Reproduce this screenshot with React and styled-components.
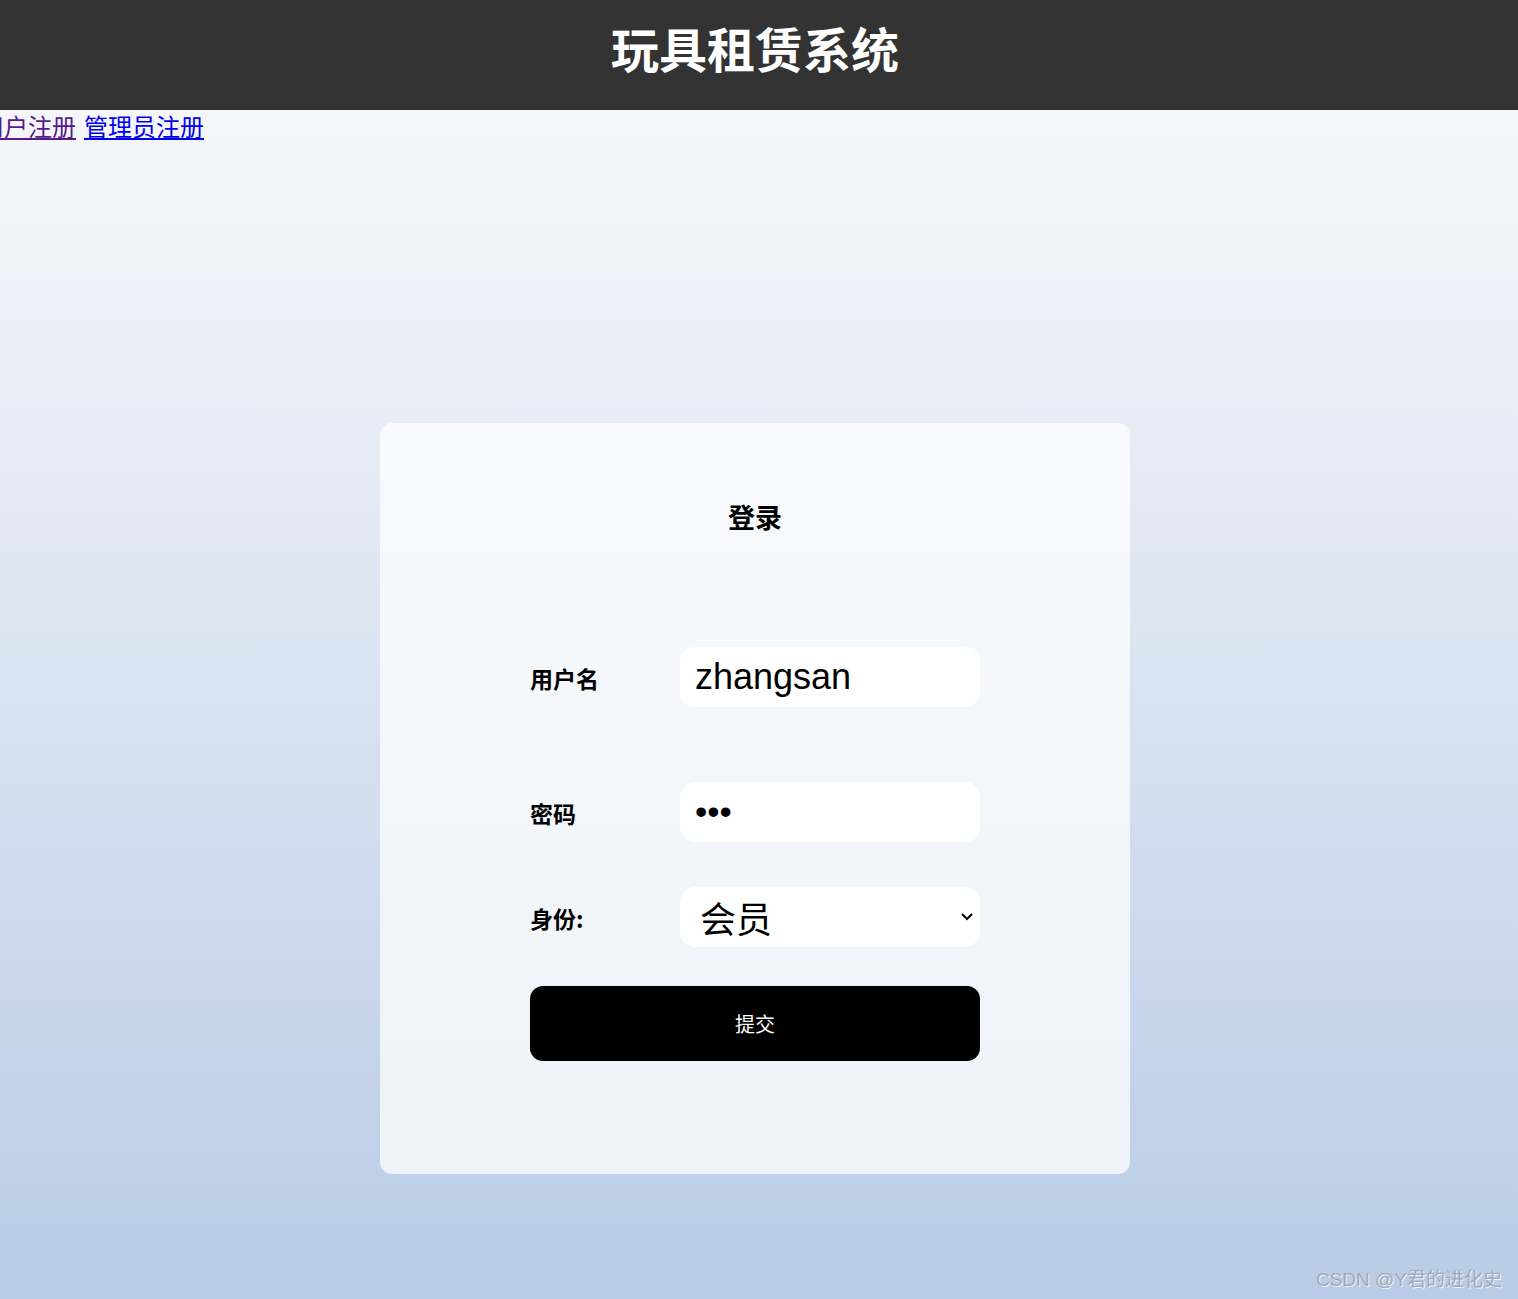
import React from 'react'
import styled, { createGlobalStyle } from 'styled-components'

const GlobalStyle = createGlobalStyle`
  html, body {
    margin: 0;
    padding: 0;
  }
  body {
    font-family: "Liberation Sans", "Noto Sans CJK SC", sans-serif;
    background: linear-gradient(to bottom, #f9fafd 0%, #e9eef7 30%, #b9cbe6 100%);
    min-height: 100vh;
  }
`

const Page = styled.div`
  min-height: 1299px;
  position: relative;
`

const Header = styled.header`
  height: 110px;
  padding-right: 8px;
  background-color: #333333;
  display: flex;
  align-items: center;
  justify-content: center;
`

const Title = styled.h1`
  margin: 0 0 16px;
  color: #ffffff;
  font-size: 48px;
  font-weight: 700;
  font-family: "Noto Sans CJK SC", sans-serif;
`

const Nav = styled.nav`
  margin-left: -20px;
  font-size: 24px;
  line-height: 32px;
  font-family: "Noto Sans CJK SC", sans-serif;
  display: flex;
  gap: 8px;
`

const NavLink = styled.a`
  color: ${p => (p.$visited ? '#551a8b' : '#0000ee')};
  text-decoration: underline;
`

const LoginCon = styled.div`
  display: flex;
  justify-content: center;
  padding: 281px 8px 0 0;
`

const Card = styled.form`
  width: 750px;
  box-sizing: border-box;
  padding: 79px 150px 113px;
  background: rgba(255, 255, 255, 0.72);
  border-radius: 12px;
  display: flex;
  flex-direction: column;
`

const Heading = styled.h2`
  margin: 0 0 115px;
  text-align: center;
  font-size: 27px;
  line-height: 30px;
  font-weight: 700;
  font-family: "Noto Sans CJK SC", sans-serif;
  color: #000;
`

const Row = styled.div`
  display: flex;
  align-items: center;
  height: 60px;
  margin-bottom: ${p => p.$gap}px;
`

const Label = styled.label`
  width: 150px;
  font-size: 23px;
  font-weight: 700;
  font-family: "Noto Sans CJK SC", sans-serif;
  color: #000;
  padding-top: 2px;
`

const TypIn = styled.input`
  width: 300px;
  height: 60px;
  box-sizing: border-box;
  border: 0;
  outline: 0;
  border-radius: 15px;
  background: #ffffff;
  padding: 0 15px;
  font-size: ${p => (p.type === 'password' ? 35 : 36)}px;
  font-family: "Liberation Sans", "Noto Sans CJK SC", sans-serif;
  color: #000;
  caret-color: #000;
`

const SelWrap = styled.div`
  position: relative;
  width: 300px;
  height: 60px;
`

const Sel = styled.select`
  appearance: none;
  width: 100%;
  height: 100%;
  border: 0;
  outline: 0;
  border-radius: 15px;
  background: #ffffff;
  padding: 0 0 0 20px;
  font-size: 36px;
  font-family: "Noto Sans CJK SC", sans-serif;
  color: #000;
`

const Chevron = styled.svg`
  position: absolute;
  right: 6px;
  top: 25px;
  pointer-events: none;
`

const Button = styled.button`
  width: 450px;
  height: 75px;
  border: 0;
  border-radius: 13px;
  background: #000000;
  color: #ffffff;
  font-size: 20px;
  font-family: "Noto Sans CJK SC", sans-serif;
  cursor: pointer;
`

const Watermark = styled.div`
  position: absolute;
  right: 16px;
  bottom: 8px;
  font-size: 19px;
  color: #9ea9b9;
  text-shadow: 1px 1px 0 rgba(255, 255, 255, 0.8);
  font-family: "Liberation Sans", "Noto Sans CJK SC", sans-serif;
`

const App = () => {
  return (
    <>
      <GlobalStyle />
      <Page>
        <Header>
          <Title>玩具租赁系统</Title>
        </Header>
        <Nav>
          <NavLink href="#user" $visited>用户注册</NavLink>
          <NavLink href="#admin">管理员注册</NavLink>
        </Nav>
        <LoginCon>
          <Card onSubmit={e => e.preventDefault()}>
            <Heading>登录</Heading>
            <Row $gap={75}>
              <Label htmlFor="name">用户名</Label>
              <TypIn type="text" id="name" name="name" defaultValue="zhangsan" />
            </Row>
            <Row $gap={45}>
              <Label htmlFor="pwd">密码</Label>
              <TypIn type="password" id="pwd" name="pwd" defaultValue="123" autoFocus />
            </Row>
            <Row $gap={39}>
              <Label htmlFor="role">身份:</Label>
              <SelWrap>
                <Sel id="role" name="role" defaultValue="member">
                  <option value="member">会员</option>
                  <option value="admin">管理员</option>
                </Sel>
                <Chevron width="14" height="10" viewBox="0 0 14 10">
                  <path d="M2 2 L7 7 L12 2" fill="none" stroke="#000" strokeWidth="2" />
                </Chevron>
              </SelWrap>
            </Row>
            <Button type="submit">提交</Button>
          </Card>
        </LoginCon>
        <Watermark>CSDN @Y君的进化史</Watermark>
      </Page>
    </>
  )
}

export default App
